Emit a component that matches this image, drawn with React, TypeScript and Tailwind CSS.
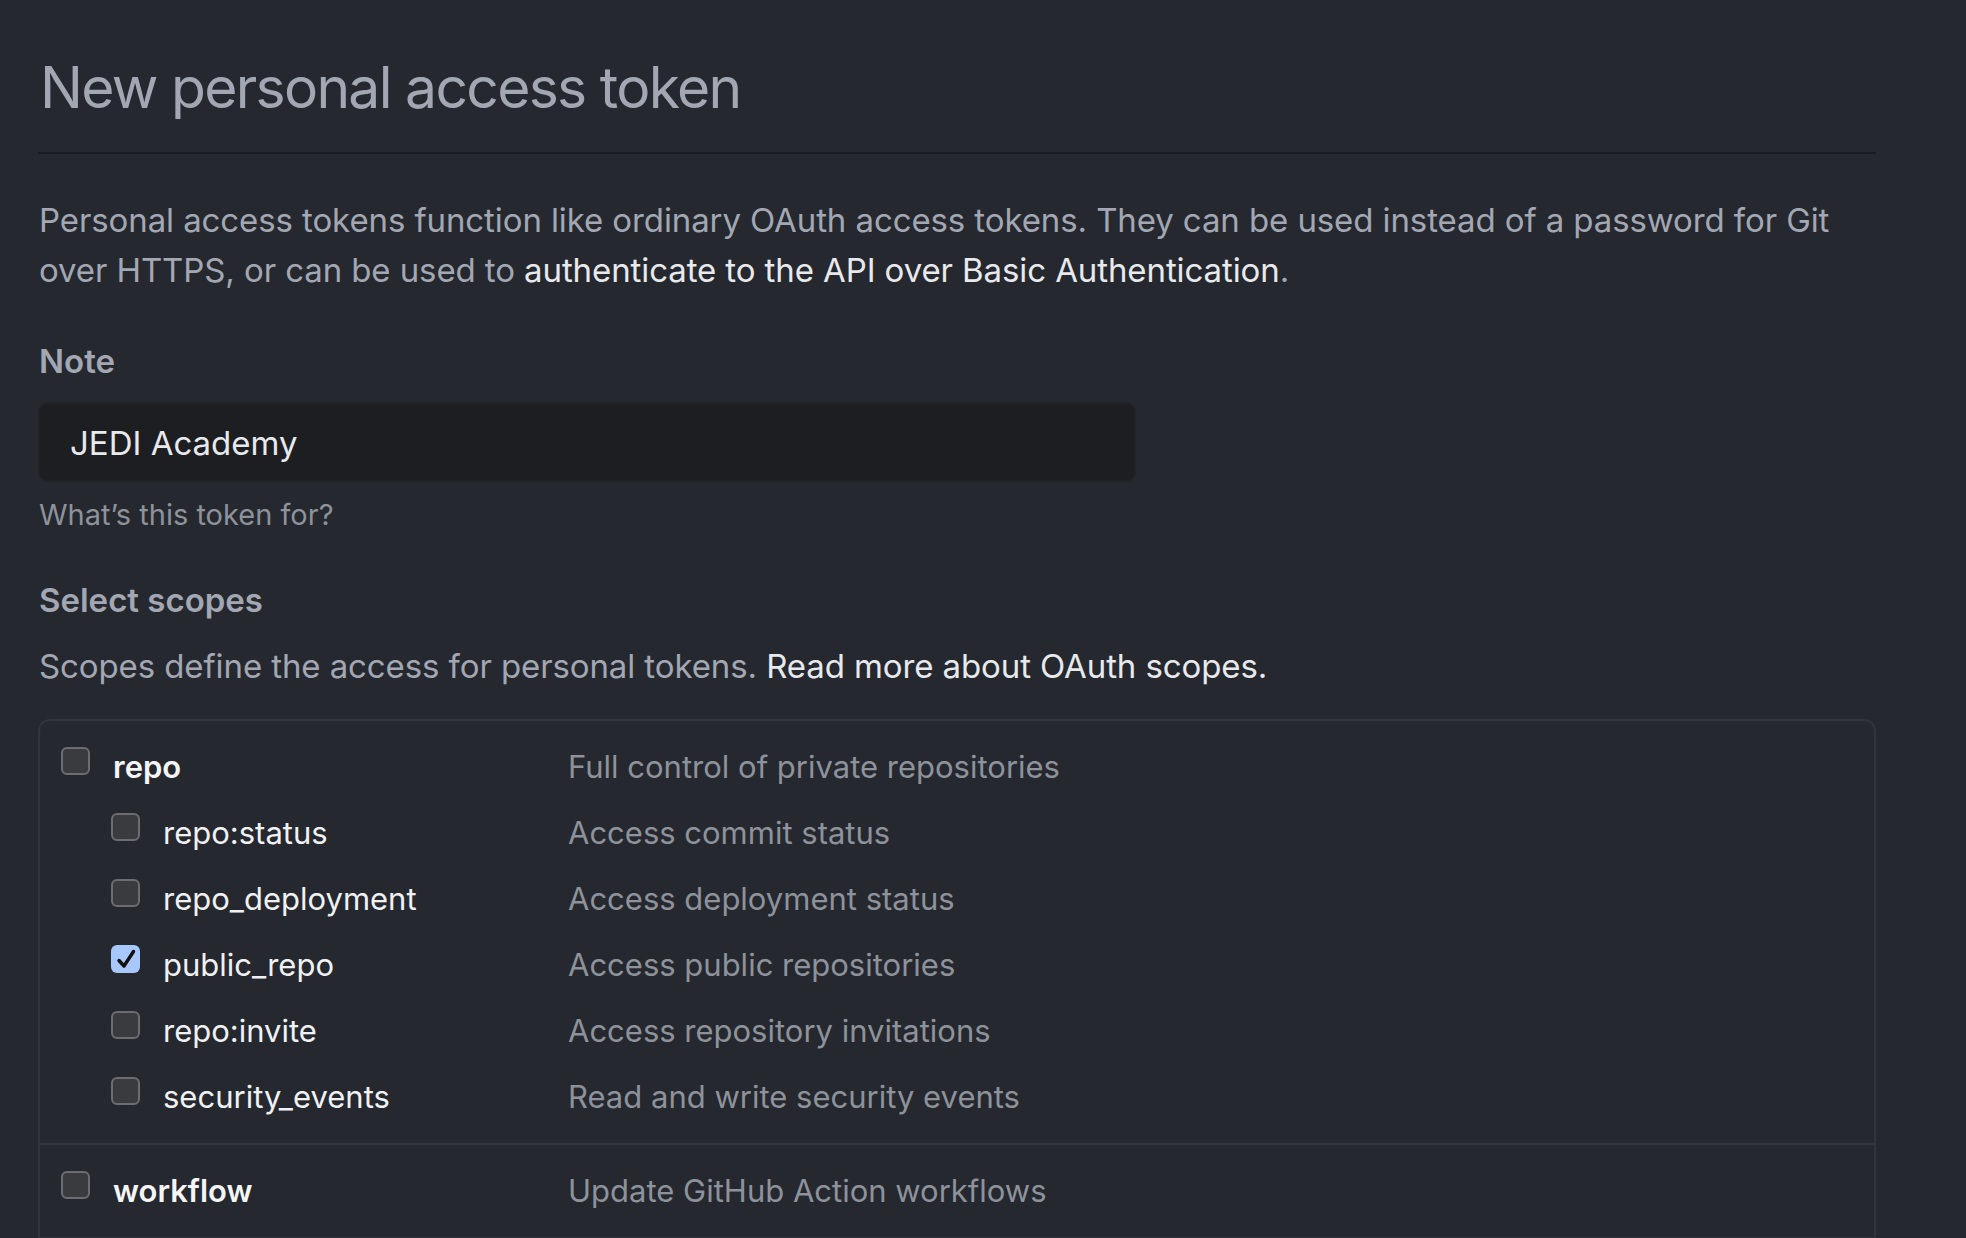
import type { ReactNode } from "react";

type Scope = {
  name: string;
  desc: string;
  checked?: boolean;
  children?: Scope[];
};

const scopes: Scope[] = [
  {
    name: "repo",
    desc: "Full control of private repositories",
    children: [
      { name: "repo:status", desc: "Access commit status" },
      { name: "repo_deployment", desc: "Access deployment status" },
      { name: "public_repo", desc: "Access public repositories", checked: true },
      { name: "repo:invite", desc: "Access repository invitations" },
      { name: "security_events", desc: "Read and write security events" },
    ],
  },
  { name: "workflow", desc: "Update GitHub Action workflows" },
];

function Checkbox({ checked = false }: { checked?: boolean }) {
  if (checked) {
    return (
      <div className="mt-[13px] flex h-[28px] w-[29px] shrink-0 items-center justify-center rounded-[6px] bg-[#a8c7fa]">
        <svg viewBox="0 0 24 24" className="h-[24px] w-[24px]">
          <path d="M5 13.5 L10 19 L19.5 4.5" fill="none" stroke="#111" strokeWidth="3.4" strokeLinecap="round" strokeLinejoin="round" />
        </svg>
      </div>
    );
  }
  return <div className="mt-[13px] h-[28px] w-[29px] shrink-0 rounded-[6px] border-2 border-[#6c6d71] bg-[#3a3b3e]" />;
}

function ScopeLine({ scope, child }: { scope: Scope; child?: boolean }) {
  return (
    <div className="flex h-[66px] items-start">
      <div className={child ? "ml-[50px] flex w-[457px] shrink-0" : "flex w-[507px] shrink-0"}>
        <Checkbox checked={scope.checked} />
        <span
          className={
            child
              ? "ml-[23px] text-[31px] leading-[66px] text-[#f0f1f3]"
              : "ml-[23px] text-[31px] font-semibold leading-[66px] text-[#f4f5f7]"
          }
        >
          {scope.name}
        </span>
      </div>
      <span className="text-[31px] leading-[66px] text-[#8d929b]">{scope.desc}</span>
    </div>
  );
}

function Link({ children }: { children: ReactNode }) {
  return <span className="text-[#e8e9ec]">{children}</span>;
}

export default function App() {
  return (
    <div
      className="h-[1238px] w-[1966px] overflow-hidden bg-[#25282e]"
      style={{ fontFamily: "Inter, 'Noto Sans', sans-serif" }}
    >
      <div className="ml-[38px] w-[1838px]">
        <h1 className="pt-[52px] pl-[2px] text-[57px] font-normal leading-[72px] tracking-[-1.7px] text-[#a2a7b3]">
          New personal access token
        </h1>
        <div className="mt-[28px] h-[2px] bg-[#1a1c20]" />

        <p className="mt-[41px] pl-[1px] text-[33px] leading-[50px] tracking-[-0.1px] text-[#a2a7b3]">
          Personal access tokens function like ordinary OAuth access tokens. They can be used instead of a password for Git
          over HTTPS, or can be used to <Link>authenticate to the API over Basic Authentication</Link>.
        </p>

        <div className="mt-[41px] pl-[1px] text-[33px] font-semibold leading-[50px] text-[#a2a7b3]">Note</div>
        <div className="mt-[16px] flex h-[80px] w-[1098px] items-center rounded-[10px] border-2 border-[#202226] bg-[#1d1e22] pt-[3px] pl-[30px] text-[33px] text-[#e8e9ec]">
          JEDI Academy
        </div>
        <div className="mt-[11px] pl-[1px] text-[29px] leading-[44px] text-[#8d929b]">What’s this token for?</div>

        <div className="mt-[38px] pl-[1px] text-[33px] font-semibold leading-[50px] text-[#a2a7b3]">Select scopes</div>
        <p className="mt-[16px] pl-[1px] text-[33px] leading-[50px] tracking-[-0.1px] text-[#a2a7b3]">
          Scopes define the access for personal tokens. <Link>Read more about OAuth scopes.</Link>
        </p>

        <div className="mt-[28px] h-[560px] rounded-[12px] border-2 border-[#31343a]">
          {scopes.map((s, i) => (
            <div key={s.name} className={i > 0 ? "border-t-2 border-[#31343a] py-[13px] pl-[21px]" : "py-[13px] pl-[21px]"}>
              <ScopeLine scope={s} />
              {s.children?.map((c) => (
                <ScopeLine key={c.name} scope={c} child />
              ))}
            </div>
          ))}
          <div className="border-t-2 border-[#31343a]" />
        </div>
      </div>
    </div>
  );
}
